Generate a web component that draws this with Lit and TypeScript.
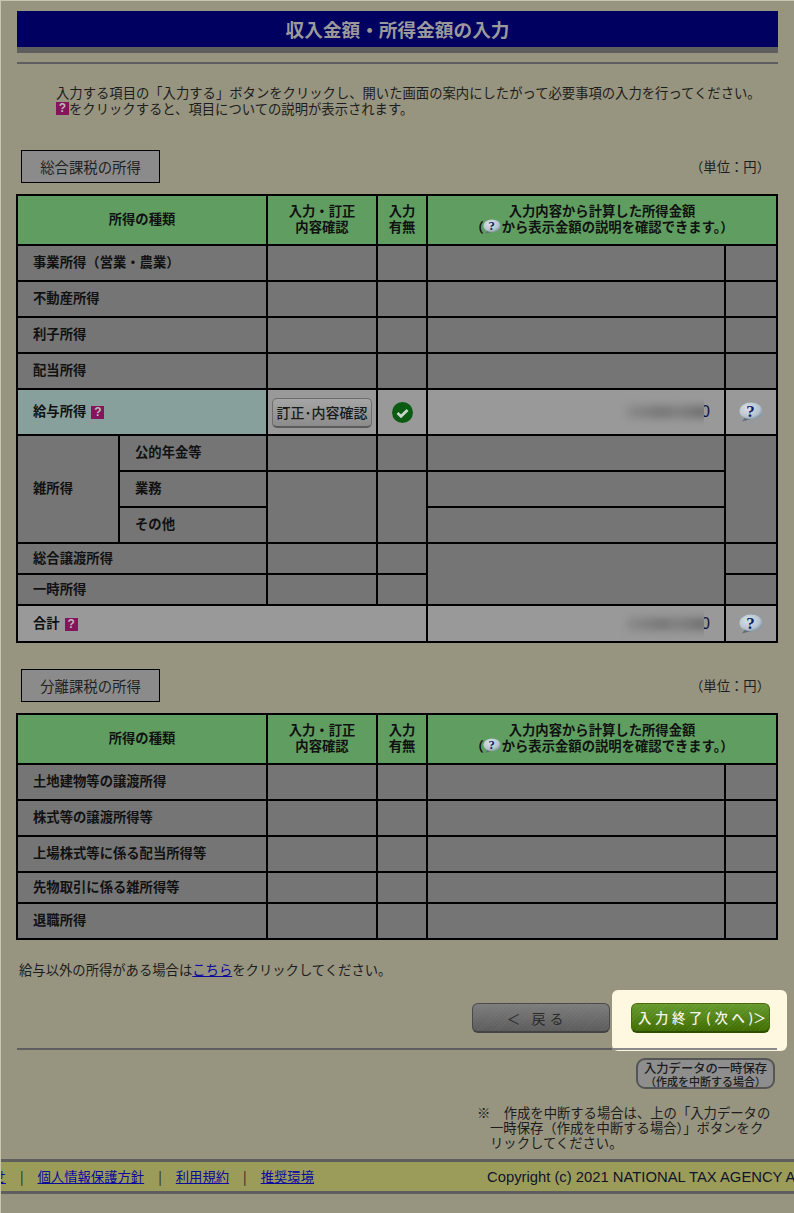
import { LitElement, html, css } from 'lit';
import { customElement } from 'lit/decorators.js';

const qmark = html`<span class="qmark">?</span>`;

const bubble = (cls = '') => html`<svg class="bubble ${cls}" viewBox="0 0 24 20">
  <defs>
    <radialGradient id="bub" cx="0.38" cy="0.35" r="0.75">
      <stop offset="0" stop-color="#d8e0e6"></stop>
      <stop offset="0.65" stop-color="#b6c4d0"></stop>
      <stop offset="1" stop-color="#6f8392"></stop>
    </radialGradient>
  </defs>
  <path d="M7 14 L3 19.5 L12 17 Z" fill="#5f6d78"></path>
  <ellipse cx="12" cy="9" rx="11.5" ry="8.5" fill="url(#bub)"></ellipse>
  <text x="11.5" y="15" text-anchor="middle" class="bubble-q">?</text>
</svg>`;

const check = html`<svg class="check" viewBox="0 0 20 20" width="21" height="21">
  <circle cx="10" cy="10" r="10" fill="#0b5c12"></circle>
  <path d="M5.2 10.4 L8.6 13.6 L14.8 7.6" fill="none" stroke="#c9d6c9" stroke-width="2.6"></path>
</svg>`;

const head = html`
  <tr class="h50">
    <th colspan="2">所得の種類</th>
    <th>入力・訂正<br />内容確認</th>
    <th>入力<br />有無</th>
    <th colspan="2">入力内容から計算した所得金額<br />&#xFF08;${bubble('sm')}から表示金額の説明を確認できます。&#xFF09;</th>
  </tr>`;

const cols = html`<colgroup>
  <col class="c1" /><col class="c2" /><col class="c3" /><col class="c4" /><col class="c5" /><col class="c6" />
</colgroup>`;

const plainRow = (label: string, h = 'h36') => html`
  <tr class=${h}>
    <td colspan="2" class="label">${label}</td>
    <td></td><td></td><td></td><td></td>
  </tr>`;

@customElement('app-root')
export class AppRoot extends LitElement {
  static styles = css`
    :host {
      display: block;
      position: relative;
      width: 794px;
      height: 1213px;
      overflow: hidden;
      box-sizing: border-box;
      border-top: 1px solid #c9c6ae;
      border-left: 1px solid #c9c6ae;
      background-color: #979480;
      background-image:
        radial-gradient(circle at center, #8d8b79 0.5px, transparent 0.7px),
        radial-gradient(circle at center, #8d8b79 0.5px, transparent 0.7px);
      background-size: 16px 16px;
      background-position: 0 0, 8px 8px;
      font-family: 'Noto Sans CJK JP', 'Liberation Sans', sans-serif;
      font-size: 13.33px;
      line-height: 16px;
      color: #1c1c1c;
    }
    .main {
      padding: 10px 16px 0 15px;
    }
    .title {
      margin: 0 0 0 1px;
      height: 36px;
      background: #000060;
      border-bottom: 6px solid #5e5e5e;
      color: #9a9a9a;
      font-size: 18.67px;
      font-weight: bold;
      line-height: 36px;
      text-align: center;
    }
    .rule {
      height: 2px;
      margin: 9px 0 0 1px;
      background: #5e5e5e;
    }
    .intro {
      margin: 21px 0 0 40px;
      line-height: 16px;
    }
    .qmark {
      display: inline-block;
      width: 13px;
      height: 13px;
      margin: -2px 0;
      background: #85145a;
      color: #b9b9b9;
      font: bold 12px/13px 'Liberation Sans', sans-serif;
      text-align: center;
      vertical-align: 2px;
    }
    td .qmark {
      margin-left: 2px;
      vertical-align: 0;
    }
    .sec {
      display: flex;
      align-items: center;
      justify-content: space-between;
      padding: 0 8px 0 5px;
    }
    .sec.first { margin-top: 33px; }
    .sec.second { margin-top: 26px; }
    .sec-label {
      box-sizing: border-box;
      width: 139px;
      height: 33px;
      border: 1px solid #000;
      background: #8b8b8b;
      font-size: 14.4px;
      line-height: 31px;
      text-align: center;
      color: #222;
    }
    table {
      width: 762px;
      table-layout: fixed;
      border-collapse: collapse;
      margin-top: 11px;
      border: 2px solid #000;
    }
    .c1 { width: 102px; }
    .c2 { width: 148px; }
    .c3 { width: 110px; }
    .c4 { width: 50px; }
    .c5 { width: 298px; }
    .c6 { width: 52px; }
    th, td {
      border: 2px solid #000;
      padding: 0;
      background: #757575;
    }
    th {
      background: #5f9e60;
      font-weight: bold;
      color: #111;
      line-height: 16px;
      text-align: center;
      padding-bottom: 2px;
    }
    td {
      font-weight: bold;
      color: #111;
    }
    td.label {
      padding: 0 0 2px 15px;
    }
    td.center { text-align: center; }
    td.on { background: #999; }
    td.teal { background: #88a09c; }
    .h31 { height: 31px; }
    .h36 { height: 36px; }
    .h37 { height: 37px; }
    .h46 { height: 46px; }
    .h50 { height: 50px; }
    .bubble {
      display: block;
      width: 24px;
      height: 20px;
      margin: 0 auto;
    }
    .bubble.sm {
      display: inline-block;
      width: 18px;
      height: 15px;
      margin: -3px 1px 0 -1px;
      vertical-align: middle;
    }
    .bubble-q {
      font: bold 17px 'Liberation Serif', serif;
      fill: #0f1a66;
    }
    .check { display: block; margin: 0 auto; }
    .fix {
      display: inline-flex;
      align-items: center;
      justify-content: center;
      box-sizing: border-box;
      width: 100px;
      height: 30px;
      margin-top: 1px;
      border-radius: 5px;
      border: 1px solid #6e6e6e;
      border-bottom: 2px solid #5a5a5a;
      background: linear-gradient(#a5a5a5, #8c8c8c);
      font-family: inherit;
      font-size: 14px;
      font-weight: 500;
      white-space: nowrap;
      color: #1a1a1a;
      padding: 0;
    }
    .amount {
      position: relative;
      height: 20px;
      line-height: 20px;
      text-align: right;
      padding-right: 14px;
      font-family: 'Liberation Sans', sans-serif;
      font-size: 16px;
      font-weight: normal;
      color: #10143c;
    }
    .smear {
      position: absolute;
      right: 20px;
      top: -4px;
      width: 84px;
      height: 28px;
      overflow: hidden;
      background: #999;
    }
    .smear::after {
      content: '';
      position: absolute;
      left: 6px;
      right: -6px;
      top: 8px;
      height: 12px;
      border-radius: 5px;
      background: linear-gradient(90deg, #8a8a8a, #747474 45%, #808080 60%, #686868);
      filter: blur(4px);
    }
    .note-line {
      margin: 22px 0 0 3px;
    }
    a {
      color: #0a0aa0;
      text-decoration: underline;
    }
    .actions {
      display: flex;
      justify-content: flex-end;
      align-items: flex-start;
      margin: 12px -9px 0 0;
      height: 67px;
    }
    .back, .next {
      box-sizing: border-box;
      height: 30px;
      padding: 0;
      font-family: inherit;
      border-radius: 6px;
      display: flex;
      align-items: center;
      justify-content: center;
      white-space: pre;
    }
    .back {
      width: 138px;
      margin-top: 13px;
      padding-right: 8px;
      border: 1px solid #4a4a4a;
      border-bottom: 2px solid #444;
      background:
        repeating-linear-gradient(135deg, rgba(255, 255, 255, 0.03) 0 1px, transparent 1px 3px),
        linear-gradient(#7d7d7d, #5c5c5c);
      color: #2a2a2a;
      font-size: 14px;
      letter-spacing: 4px;
    }
    .spot {
      position: relative;
      z-index: 1;
      box-sizing: border-box;
      width: 175px;
      height: 61px;
      margin-left: 2px;
      padding: 13px 0 0 19px;
      border-radius: 6px;
      background: #fff8e0;
    }
    .spot::after {
      content: '';
      position: absolute;
      left: 0;
      width: 165px;
      bottom: 1px;
      height: 2px;
      background: #8a8a8a;
    }
    .next {
      width: 139px;
      border: 1px solid #4a6a10;
      border-bottom: 2px solid #2f4f00;
      background:
        repeating-linear-gradient(135deg, rgba(255, 255, 255, 0.06) 0 1px, transparent 1px 3px),
        linear-gradient(#659a2c, #3f6c00);
      color: #f6f6f0;
      font-size: 13.33px;
      font-weight: 500;
      letter-spacing: 3.7px;
      justify-content: flex-start;
      padding-left: 6px;
    }
    .next .gt { letter-spacing: 0; margin-left: -4px; }
    .rule.low {
      margin-top: -9px;
    }
    .save-row {
      display: flex;
      justify-content: flex-end;
      margin: 8px 3px 0 0;
    }
    .save {
      box-sizing: border-box;
      width: 139px;
      height: 31px;
      padding: 0;
      border: 2px solid #555;
      border-radius: 9px;
      background: #8e8e8e;
      font-family: inherit;
      font-size: 12.3px;
      font-weight: 500;
      line-height: 14px;
      color: #1c1c1c;
      text-align: center;
      white-space: nowrap;
    }
    .save small {
      display: block;
      font-size: 11px;
      line-height: 12px;
    }
    .caution {
      margin: 16px 0 0 461px;
      width: 281px;
      padding-left: 13px;
      text-indent: -13px;
      line-height: 15px;
    }
    .foot {
      display: flex;
      align-items: center;
      box-sizing: border-box;
      height: 35px;
      margin-top: 9px;
      margin-left: -1px;
      width: 794px;
      overflow: hidden;
      white-space: nowrap;
      border-top: 3px solid #5e5e5e;
      border-bottom: 3px solid #5e5e5e;
      background: #9c9c5a;
    }
    .links {
      display: flex;
      flex: none;
      justify-content: flex-end;
      width: 314px;
    }
    .links a { flex: none; }
    .links b {
      flex: none;
      font-weight: normal;
      padding: 0 14px;
      color: #1c1c1c;
    }
    .copy {
      flex: none;
      margin-left: 173px;
      font-family: 'Liberation Sans', sans-serif;
      font-size: 14.8px;
      color: #10132a;
    }
  `;

  render() {
    return html`
      <div class="main">
        <h1 class="title">収入金額・所得金額の入力</h1>
        <div class="rule"></div>
        <p class="intro">
          入力する項目の「入力する」ボタンをクリックし、開いた画面の案内にしたがって必要事項の入力を行ってください。<br />
          ${qmark}をクリックすると、項目についての説明が表示されます。
        </p>

        <div class="sec first">
          <div class="sec-label">総合課税の所得</div>
          <div>&#xFF08;単位&#xFF1A;円&#xFF09;</div>
        </div>
        <table>
          ${cols}
          ${head}
          ${plainRow('事業所得\uFF08営業・農業\uFF09')}
          ${plainRow('不動産所得')}
          ${plainRow('利子所得')}
          ${plainRow('配当所得')}
          <tr class="h46">
            <td colspan="2" class="label teal">給与所得 ${qmark}</td>
            <td class="on center"><button class="fix">訂正&#xFF65;内容確認</button></td>
            <td class="on">${check}</td>
            <td class="on"><div class="amount">0<span class="smear"></span></div></td>
            <td class="on">${bubble()}</td>
          </tr>
          <tr class="h36">
            <td rowspan="3" class="label">雑所得</td>
            <td class="label">公的年金等</td>
            <td></td><td></td><td></td>
            <td rowspan="3"></td>
          </tr>
          <tr class="h36">
            <td class="label">業務</td>
            <td rowspan="2"></td><td rowspan="2"></td><td></td>
          </tr>
          <tr class="h36">
            <td class="label">その他</td>
            <td></td>
          </tr>
          <tr class="h31">
            <td colspan="2" class="label">総合譲渡所得</td>
            <td></td><td></td><td rowspan="2"></td><td></td>
          </tr>
          <tr class="h31">
            <td colspan="2" class="label">一時所得</td>
            <td></td><td></td><td></td>
          </tr>
          <tr class="h37">
            <td colspan="4" class="label on">合計 ${qmark}</td>
            <td class="on"><div class="amount">0<span class="smear"></span></div></td>
            <td class="on">${bubble()}</td>
          </tr>
        </table>

        <div class="sec second">
          <div class="sec-label">分離課税の所得</div>
          <div>&#xFF08;単位&#xFF1A;円&#xFF09;</div>
        </div>
        <table>
          ${cols}
          ${head}
          ${plainRow('土地建物等の譲渡所得')}
          ${plainRow('株式等の譲渡所得等')}
          ${plainRow('上場株式等に係る配当所得等')}
          ${plainRow('先物取引に係る雑所得等', 'h31')}
          ${plainRow('退職所得')}
        </table>

        <div class="note-line">給与以外の所得がある場合は<a href="#">こちら</a>をクリックしてください。</div>

        <div class="actions">
          <button class="back">&#xFF1C; 戻る</button>
          <div class="spot">
            <button class="next">入力終了(次へ)<span class="gt">&#xFF1E;</span></button>
          </div>
        </div>
        <div class="rule low"></div>

        <div class="save-row">
          <button class="save">入力データの一時保存<small>&#xFF08;作成を中断する場合&#xFF09;</small></button>
        </div>
        <div class="caution">※&#x3000;作成を中断する場合は、上の「入力データの一時保存&#xFF08;作成を中断する場合&#xFF09;」ボタンをクリックしてください。</div>
      </div>
      <div class="foot">
        <div class="links">
          <a href="#">お問い合わせ</a><b>|</b>
          <a href="#">個人情報保護方針</a><b>|</b>
          <a href="#">利用規約</a><b>|</b>
          <a href="#">推奨環境</a>
        </div>
        <div class="copy">Copyright (c) 2021 NATIONAL TAX AGENCY All Rights Reserved.</div>
      </div>
    `;
  }
}
